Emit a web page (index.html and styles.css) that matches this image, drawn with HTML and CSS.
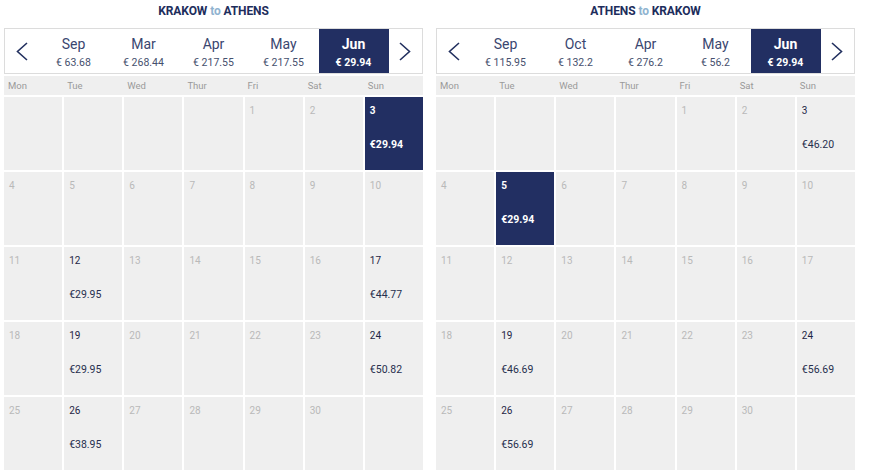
FILE: index.html
```html
<!DOCTYPE html>
<html lang="en">
<head>
<meta charset="utf-8">
<title>Fare calendar</title>
<link rel="stylesheet" href="styles.css">
</head>
<body>
<div class="page">

  <section class="panel">
    <h2 class="route">KRAKOW <span class="to">to</span> ATHENS</h2>
    <div class="months">
      <button class="nav" aria-label="Previous"><svg width="12" height="19" viewBox="0 0 12 19"><polyline points="11,1 1.5,9.5 11,18" /></svg></button>
      <div class="month"><span class="m-name">Sep</span><span class="m-price">€ 63.68</span></div>
      <div class="month"><span class="m-name">Mar</span><span class="m-price">€ 268.44</span></div>
      <div class="month"><span class="m-name">Apr</span><span class="m-price">€ 217.55</span></div>
      <div class="month"><span class="m-name">May</span><span class="m-price">€ 217.55</span></div>
      <div class="month active"><span class="m-name">Jun</span><span class="m-price">€ 29.94</span></div>
      <button class="nav" aria-label="Next"><svg width="12" height="19" viewBox="0 0 12 19"><polyline points="1,1 10.5,9.5 1,18" /></svg></button>
    </div>
    <div class="weekdays">
      <span>Mon</span><span>Tue</span><span>Wed</span><span>Thur</span><span>Fri</span><span>Sat</span><span>Sun</span>
    </div>
    <div class="days">
      <div class="day"></div><div class="day"></div><div class="day"></div><div class="day"></div>
      <div class="day"><span class="num">1</span></div>
      <div class="day"><span class="num">2</span></div>
      <div class="day open selected"><span class="num">3</span><span class="fare">€29.94</span></div>

      <div class="day"><span class="num">4</span></div>
      <div class="day"><span class="num">5</span></div>
      <div class="day"><span class="num">6</span></div>
      <div class="day"><span class="num">7</span></div>
      <div class="day"><span class="num">8</span></div>
      <div class="day"><span class="num">9</span></div>
      <div class="day"><span class="num">10</span></div>

      <div class="day"><span class="num">11</span></div>
      <div class="day open"><span class="num">12</span><span class="fare">€29.95</span></div>
      <div class="day"><span class="num">13</span></div>
      <div class="day"><span class="num">14</span></div>
      <div class="day"><span class="num">15</span></div>
      <div class="day"><span class="num">16</span></div>
      <div class="day open"><span class="num">17</span><span class="fare">€44.77</span></div>

      <div class="day"><span class="num">18</span></div>
      <div class="day open"><span class="num">19</span><span class="fare">€29.95</span></div>
      <div class="day"><span class="num">20</span></div>
      <div class="day"><span class="num">21</span></div>
      <div class="day"><span class="num">22</span></div>
      <div class="day"><span class="num">23</span></div>
      <div class="day open"><span class="num">24</span><span class="fare">€50.82</span></div>

      <div class="day"><span class="num">25</span></div>
      <div class="day open"><span class="num">26</span><span class="fare">€38.95</span></div>
      <div class="day"><span class="num">27</span></div>
      <div class="day"><span class="num">28</span></div>
      <div class="day"><span class="num">29</span></div>
      <div class="day"><span class="num">30</span></div>
      <div class="day"></div>
    </div>
  </section>

  <section class="panel">
    <h2 class="route">ATHENS <span class="to">to</span> KRAKOW</h2>
    <div class="months">
      <button class="nav" aria-label="Previous"><svg width="12" height="19" viewBox="0 0 12 19"><polyline points="11,1 1.5,9.5 11,18" /></svg></button>
      <div class="month"><span class="m-name">Sep</span><span class="m-price">€ 115.95</span></div>
      <div class="month"><span class="m-name">Oct</span><span class="m-price">€ 132.2</span></div>
      <div class="month"><span class="m-name">Apr</span><span class="m-price">€ 276.2</span></div>
      <div class="month"><span class="m-name">May</span><span class="m-price">€ 56.2</span></div>
      <div class="month active"><span class="m-name">Jun</span><span class="m-price">€ 29.94</span></div>
      <button class="nav" aria-label="Next"><svg width="12" height="19" viewBox="0 0 12 19"><polyline points="1,1 10.5,9.5 1,18" /></svg></button>
    </div>
    <div class="weekdays">
      <span>Mon</span><span>Tue</span><span>Wed</span><span>Thur</span><span>Fri</span><span>Sat</span><span>Sun</span>
    </div>
    <div class="days">
      <div class="day"></div><div class="day"></div><div class="day"></div><div class="day"></div>
      <div class="day"><span class="num">1</span></div>
      <div class="day"><span class="num">2</span></div>
      <div class="day open"><span class="num">3</span><span class="fare">€46.20</span></div>

      <div class="day"><span class="num">4</span></div>
      <div class="day open selected"><span class="num">5</span><span class="fare">€29.94</span></div>
      <div class="day"><span class="num">6</span></div>
      <div class="day"><span class="num">7</span></div>
      <div class="day"><span class="num">8</span></div>
      <div class="day"><span class="num">9</span></div>
      <div class="day"><span class="num">10</span></div>

      <div class="day"><span class="num">11</span></div>
      <div class="day"><span class="num">12</span></div>
      <div class="day"><span class="num">13</span></div>
      <div class="day"><span class="num">14</span></div>
      <div class="day"><span class="num">15</span></div>
      <div class="day"><span class="num">16</span></div>
      <div class="day"><span class="num">17</span></div>

      <div class="day"><span class="num">18</span></div>
      <div class="day open"><span class="num">19</span><span class="fare">€46.69</span></div>
      <div class="day"><span class="num">20</span></div>
      <div class="day"><span class="num">21</span></div>
      <div class="day"><span class="num">22</span></div>
      <div class="day"><span class="num">23</span></div>
      <div class="day open"><span class="num">24</span><span class="fare">€56.69</span></div>

      <div class="day"><span class="num">25</span></div>
      <div class="day open"><span class="num">26</span><span class="fare">€56.69</span></div>
      <div class="day"><span class="num">27</span></div>
      <div class="day"><span class="num">28</span></div>
      <div class="day"><span class="num">29</span></div>
      <div class="day"><span class="num">30</span></div>
      <div class="day"></div>
    </div>
  </section>

</div>
</body>
</html>
```

FILE: styles.css
```css
* {
  box-sizing: border-box;
}

body {
  margin: 0;
  background: #ffffff;
  font-family: Roboto, "Liberation Sans", Arial, sans-serif;
  color: #1f2a4c;
}

.page {
  display: flex;
  gap: 13px;
  padding-left: 4px;
}

.panel {
  width: 419px;
  display: flex;
  flex-direction: column;
}

/* route heading */
.route {
  margin: 0;
  height: 28px;
  padding-top: 3px;
  font-size: 12px;
  line-height: 16px;
  font-weight: 700;
  text-align: center;
  color: #1d2d5c;
  letter-spacing: -0.1px;
}

.route .to {
  color: #8fb3d0;
}

/* month selector bar */
.months {
  display: flex;
  height: 46px;
  border: 1px solid #dcdcdc;
}

.nav {
  flex: 1;
  border: 0;
  padding: 0;
  background: transparent;
  display: flex;
  align-items: center;
  justify-content: center;
}

.nav svg {
  fill: none;
  stroke: #22305f;
  stroke-width: 1.6;
}

.month {
  width: 70px;
  padding-top: 2px;
  display: flex;
  flex-direction: column;
  align-items: center;
  justify-content: center;
  gap: 5px;
  color: #3a4670;
}

.m-name {
  font-size: 14px;
  line-height: 16px;
}

.m-price {
  font-size: 10.5px;
  line-height: 12px;
  color: #46506e;
}

.month.active {
  background: #222f62;
  color: #ffffff;
}

.month.active .m-name,
.month.active .m-price {
  font-weight: 700;
  color: #ffffff;
}

/* weekday header */
.weekdays {
  margin-top: 2px;
  height: 19px;
  background: #efefef;
  display: grid;
  grid-template-columns: repeat(7, 1fr);
  column-gap: 2px;
  align-items: center;
  font-size: 9.5px;
  color: #9a9a9a;
}

.weekdays span {
  padding-left: 3px;
}

.weekdays span:first-child {
  padding-left: 4px;
}

/* day grid */
.days {
  margin-top: 2px;
  display: grid;
  grid-template-columns: repeat(7, 1fr);
  grid-auto-rows: 73px;
  gap: 2px;
}

.day {
  background: #efefef;
  padding: 8px 5px 0;
  display: flex;
  flex-direction: column;
  align-items: flex-start;
}

.num {
  font-size: 10px;
  line-height: 12px;
  color: #b9b9b9;
}

.fare {
  margin-top: 22px;
  font-size: 10.5px;
  line-height: 12px;
  color: #27304e;
}

.day.open .num {
  color: #1e2545;
}

.day.selected {
  background: #222f62;
}

.day.selected .num,
.day.selected .fare {
  color: #ffffff;
  font-weight: 700;
}
```
